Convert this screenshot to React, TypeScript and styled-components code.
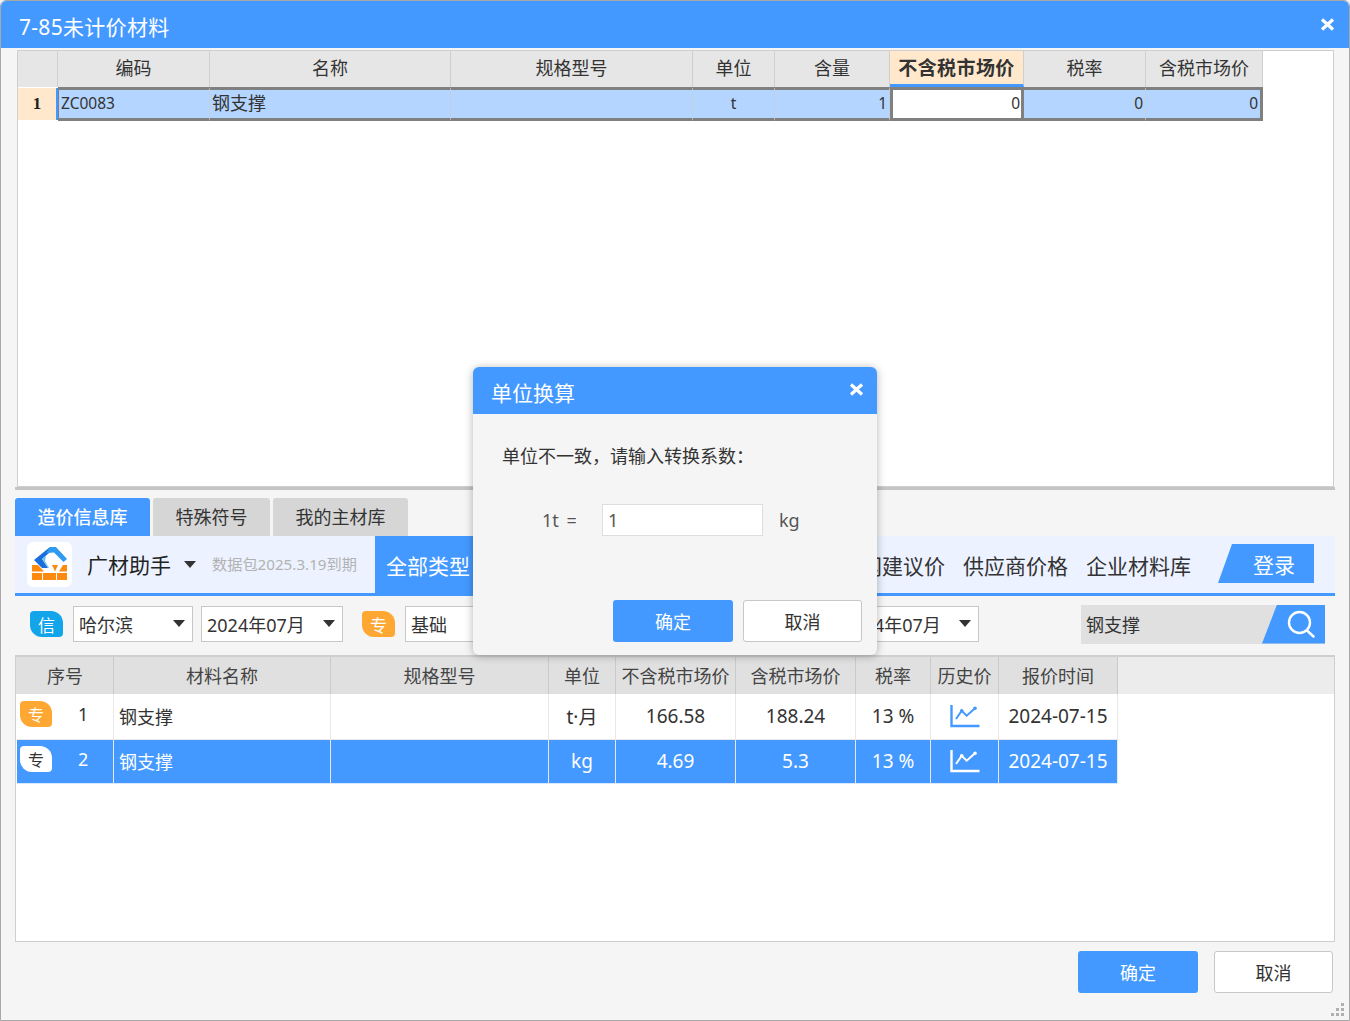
import React from 'react';
import styled, { createGlobalStyle } from 'styled-components';

const BLUE = '#4399ff';
const FONT = '"Noto Sans", "Noto Sans CJK SC", sans-serif';

const GlobalStyle = createGlobalStyle`
  html, body {
    margin: 0;
    padding: 0;
    background: #f5f5f5;
  }
  * {
    box-sizing: border-box;
  }
  body {
    font-family: ${FONT};
    color: #333;
  }
`;

const Page = styled.div`
  position: relative;
  width: 1350px;
  height: 1021px;
  overflow: hidden;
  background: #f5f5f5;
  border: 1px solid #a8a8a8;
  border-radius: 6px 6px 0 0;
  display: flex;
  flex-direction: column;
`;

const TitleBar = styled.div`
  flex: none;
  height: 47px;
  background: ${BLUE};
  color: #fff;
  font-size: 21px;
  display: flex;
  align-items: center;
  justify-content: space-between;
  padding: 0 14px 0 18px;
  border-radius: 5px 5px 0 0;
`;

const TitleText = styled.span`
  padding-top: 2px;
  letter-spacing: 0.3px;
`;

const CloseBtn = styled.svg`
  display: block;
`;

const TopPanel = styled.div`
  flex: none;
  height: 437px;
  margin: 2px 15px 0 16px;
  background: #fff;
  border: 1px solid #cfcfcf;
`;

const topCols = '40px 152px 241px 242px 82px 115px 134px 122px 117px';

const TopHead = styled.div`
  display: grid;
  grid-template-columns: ${topCols};
  height: 36px;
  width: 1245px;
`;

const TopHeadCell = styled.div<{ $active?: boolean }>`
  display: flex;
  align-items: center;
  justify-content: center;
  font-size: ${p => (p.$active ? '19px' : '18px')};
  letter-spacing: ${p => (p.$active ? '0.4px' : '0')};
  color: #333;
  font-weight: ${p => (p.$active ? 700 : 400)};
  background: ${p => (p.$active ? '#ffe8cc' : '#e6e6e6')};
  border-right: 1px solid #cfcfcf;
  border-bottom: ${p => (p.$active ? `3px solid ${BLUE}` : 'none')};
  padding-bottom: ${p => (p.$active ? '1px' : '4px')};
  white-space: nowrap;
`;

const TopRow = styled.div`
  display: grid;
  grid-template-columns: ${topCols};
  grid-template-rows: 34px;
  height: 34px;
  width: 1245px;
  line-height: 20px;
`;

const RowNum = styled.div`
  background: #ffe8cc;
  border-right: 2px solid ${BLUE};
  margin-top: 1px;
  margin-bottom: 1px;
  display: flex;
  align-items: center;
  justify-content: center;
  font-family: "Liberation Serif", serif;
  font-weight: 700;
  font-size: 17px;
  color: #222;
`;

const TopCell = styled.div<{ $align?: string; $num?: boolean; $first?: boolean; $last?: boolean }>`
  background: #b3d5ff;
  border-top: 3px solid #808080;
  border-bottom: 3px solid #808080;
  border-right: ${p => (p.$last ? '3px solid #808080' : '1px solid #c4cfdc')};
  border-left: ${p => (p.$first ? '1px solid #808080' : 'none')};
  display: flex;
  align-items: center;
  justify-content: ${p => p.$align || 'flex-start'};
  padding: 0 2px 3px;
  font-size: ${p => (p.$num ? '15.500px' : '18px')};
  color: #333;
  white-space: nowrap;
`;

const ActiveCell = styled.div`
  background: #fff;
  border: 3px solid #808080;
  display: flex;
  align-items: center;
  justify-content: flex-end;
  padding: 0 1px 3px;
  font-size: 15.500px;
  color: #333;
`;

const Splitter = styled.div`
  flex: none;
  height: 3px;
  margin: 0 14px;
  background: #c4c4c4;
`;

const Tabs = styled.div`
  flex: none;
  display: flex;
  gap: 3px;
  height: 38px;
  margin: 8px 0 0 14px;
`;

const Tab = styled.div<{ $active?: boolean; $w: number }>`
  width: ${p => p.$w}px;
  background: ${p => (p.$active ? BLUE : '#d6d6d6')};
  color: ${p => (p.$active ? '#fff' : '#333')};
  font-size: 18px;
  font-weight: ${p => (p.$active ? 500 : 400)};
  border-radius: 3px 3px 0 0;
  display: flex;
  align-items: center;
  justify-content: center;
  padding-bottom: 2px;
`;

const Toolbar = styled.div`
  flex: none;
  height: 60px;
  margin: 0 14px;
  background: #ecf2ff;
  border-bottom: 3px solid ${BLUE};
  display: flex;
  align-items: stretch;
  padding-left: 12px;
`;

const LogoBox = styled.div`
  flex: none;
  width: 45px;
  height: 45px;
  margin-top: 6px;
  background: #fff;
  border-radius: 6px;
`;

const BrandName = styled.div`
  margin-left: 15px;
  font-size: 21px;
  color: #222;
  align-self: center;
  white-space: nowrap;
  padding-bottom: 2px;
`;

const Caret = styled.div<{ $size?: number }>`
  flex: none;
  width: 0;
  height: 0;
  border-left: ${p => p.$size ?? 6}px solid transparent;
  border-right: ${p => p.$size ?? 6}px solid transparent;
  border-top: ${p => (p.$size ?? 6) + 1}px solid #333;
`;

const BrandCaret = styled(Caret)`
  align-self: center;
  margin: 0 0 0 13px;
`;

const PackNote = styled.div`
  margin-left: 16px;
  width: 163px;
  font-size: 15.200px;
  color: #b2b2b2;
  align-self: center;
  white-space: nowrap;
  padding-bottom: 4px;
`;

const NavActive = styled.div`
  background: ${BLUE};
  color: #fff;
  font-size: 21px;
  display: flex;
  align-items: center;
  padding: 0 11px;
  white-space: nowrap;
`;

const NavItems = styled.div`
  flex: 1;
  display: flex;
  align-items: center;
  justify-content: flex-end;
  gap: 18px;
  font-size: 21px;
  color: #333;
  white-space: nowrap;
`;

const Login = styled.div`
  flex: none;
  width: 96px;
  height: 39px;
  margin: 8px 21px 0 27px;
  background: ${BLUE};
  color: #fff;
  font-size: 21px;
  clip-path: polygon(14px 0, 100% 0, 100% 100%, 0 100%);
  display: flex;
  align-items: center;
  justify-content: center;
  padding-left: 16px;
`;

const Filters = styled.div`
  flex: none;
  height: 59px;
  margin: 0 14px;
  display: flex;
  align-items: center;
  padding: 0 10px 3px 15px;
`;

const Badge = styled.div<{ $color: string; $text?: string; $ml?: number }>`
  flex: none;
  width: 33px;
  height: 26px;
  margin-left: ${p => p.$ml ?? 0}px;
  background: ${p => p.$color};
  color: ${p => p.$text || '#fff'};
  border-radius: 4px 12px 4px 12px;
  font-size: 17px;
  display: flex;
  align-items: center;
  justify-content: center;
`;

const Select = styled.div<{ $w: number; $ml: number }>`
  flex: none;
  width: ${p => p.$w}px;
  height: 36px;
  margin-left: ${p => p.$ml}px;
  background: #fff;
  border: 1px solid #c8c8c8;
  display: flex;
  align-items: center;
  justify-content: space-between;
  padding: 0 7px 1px 5px;
  font-size: 18px;
  color: #333;
  white-space: nowrap;
`;

const SearchBox = styled.div`
  flex: none;
  width: 244px;
  height: 39px;
  margin-left: 102px;
  background: #e0e0e0;
  display: flex;
  align-items: center;
  font-size: 18px;
  color: #333;
  padding-left: 5px;
  position: relative;
`;

const SearchBtn = styled.div`
  position: absolute;
  right: 0;
  top: 0;
  width: 63px;
  height: 39px;
  background: ${BLUE};
  clip-path: polygon(15px 0, 100% 0, 100% 100%, 0 100%);
  display: flex;
  align-items: center;
  justify-content: center;
  padding-left: 15px;
`;

const LowerPanel = styled.div`
  flex: none;
  height: 287px;
  margin: 0 14px;
  background: #fff;
  border: 1px solid #cfcfcf;
  border-top-width: 2px;
`;

const lowCols = '97px 217px 218px 67px 120px 120px 75px 68px 119px';

const LowHead = styled.div`
  display: grid;
  grid-template-columns: ${lowCols} 1fr;
  height: 37px;
  padding-left: 1px;
  background: #e0e0e0;
`;

const LowHeadCell = styled.div`
  display: flex;
  align-items: center;
  justify-content: center;
  font-size: 18px;
  color: #444;
  border-right: 1px solid #cacaca;
  padding-bottom: 2px;
  white-space: nowrap;
  &:last-child {
    background: #ececec;
    border-right: none;
  }
`;

const LowRow = styled.div<{ $selected?: boolean; $h: number }>`
  display: grid;
  grid-template-columns: ${lowCols};
  width: 1101px;
  height: ${p => p.$h}px;
  margin-left: 1px;
  background: ${p => (p.$selected ? BLUE : '#fff')};
  color: ${p => (p.$selected ? '#fff' : '#333')};
  border-bottom: 1px solid ${p => (p.$selected ? '#d8e8fb' : '#e8e8e8')};
`;

const LowCell = styled.div<{ $left?: boolean }>`
  display: flex;
  align-items: center;
  justify-content: ${p => (p.$left ? 'flex-start' : 'center')};
  padding-left: ${p => (p.$left ? '5px' : '0')};
  padding-bottom: 1px;
  font-size: ${p => (p.$left ? '18px' : '19px')};
  border-right: 1px solid #e8e8e8;
  white-space: nowrap;
`;

const SeqCell = styled(LowCell)`
  justify-content: flex-start;
  padding-left: 3px;
  gap: 26px;
  font-size: 18px;
`;

const SmallBadge = styled(Badge)`
  width: 32px;
  height: 26px;
  font-size: 16px;
  margin-bottom: 4px;
`;

const SeqNum = styled.span`
  margin-bottom: 4px;
`;

const Footer = styled.div`
  flex: none;
  display: flex;
  justify-content: flex-end;
  gap: 16px;
  margin-top: 9px;
  padding-right: 16px;
`;

const Button = styled.div<{ $primary?: boolean }>`
  width: ${p => (p.$primary ? 120 : 119)}px;
  height: 42px;
  border-radius: 3px;
  background: ${p => (p.$primary ? BLUE : '#fff')};
  color: ${p => (p.$primary ? '#fff' : '#333')};
  border: ${p => (p.$primary ? 'none' : '1px solid #c8c8c8')};
  font-size: 18px;
  display: flex;
  align-items: center;
  justify-content: center;
`;

const Grip = styled.svg`
  position: absolute;
  right: 4px;
  bottom: 4px;
`;

const Dialog = styled.div`
  position: absolute;
  left: 472px;
  top: 366px;
  width: 404px;
  height: 288px;
  background: #f5f5f5;
  border-radius: 6px;
  box-shadow: 0 1px 8px rgba(0, 0, 0, 0.3);
  overflow: hidden;
  display: flex;
  flex-direction: column;
`;

const DialogHead = styled.div`
  flex: none;
  height: 47px;
  background: ${BLUE};
  color: #fff;
  font-size: 21px;
  display: flex;
  align-items: center;
  justify-content: space-between;
  padding: 3px 13px 0 18px;
`;

const DialogClose = styled.div`
  margin-top: -6px;
`;

const DialogMsg = styled.div`
  margin: 29px 0 0 29px;
  font-size: 18px;
  line-height: 26px;
  color: #333;
`;

const ConvertRow = styled.div`
  display: flex;
  align-items: center;
  margin: 35px 0 0 69px;
  font-size: 18px;
  color: #555;
`;

const ConvertLabel = styled.span`
  width: 60px;
  word-spacing: 3px;
`;

const ConvertInput = styled.div`
  width: 161px;
  height: 32px;
  background: #fff;
  border: 1px solid #dedede;
  padding-left: 5px;
  display: flex;
  align-items: center;
  margin-right: 16px;
`;

const DialogButtons = styled.div`
  margin: 64px 0 0 140px;
  display: flex;
  gap: 10px;
`;

const Logo = () => (
  <svg width="45" height="45" viewBox="0 0 45 45">
    <path d="M7 18 L23 5 H29 L15 17 L21 26 H15 Z" fill="#1a6fdc" />
    <path d="M23 5 H29 L40 17 L36.500 20 L27 10.500 L19 11 Z" fill="#2f9bf0" />
    <path d="M15 17 L19 14 L18 19 L22 26 H21 Z" fill="#6cc0f7" />
    <g fill="#fb8a0e">
      <path d="M5 23 H11 L17 29.500 H5 Z" />
      <path d="M25 23 H31 L28 29.500 Z" />
      <path d="M32 29.500 L36 23 H40 V29.500 Z" />
      <rect x="5" y="31" width="10" height="7" />
      <rect x="16" y="31" width="13" height="7" />
      <rect x="30" y="31" width="10" height="7" />
    </g>
  </svg>
);

const ChartIcon = ({ color }: { color: string }) => (
  <svg width="30" height="24" viewBox="0 0 30 24" fill="none" stroke={color}>
    <path d="M1.500 1 V22 H29.500" strokeWidth="2.400" />
    <path d="M6 15 L11.700 6.700 L16.700 11.700 L25 4.300" strokeWidth="2" />
    <circle cx="11.700" cy="6.700" r="1.800" fill={color} strokeWidth="0" />
    <circle cx="25" cy="4.300" r="1.800" fill={color} strokeWidth="0" />
  </svg>
);

const CrossIcon = () => (
  <CloseBtn width="15" height="13" viewBox="0 0 15 13">
    <path d="M2 1.500 L13 11.500 M13 1.500 L2 11.500" stroke="#fff" strokeWidth="3.200" />
  </CloseBtn>
);

const SearchIcon = () => (
  <svg width="30" height="28" viewBox="0 0 30 28" fill="none" stroke="#fff" strokeWidth="2.400">
    <circle cx="13.500" cy="12.500" r="10.500" />
    <path d="M21 20.500 L27.500 26.500" strokeLinecap="round" />
  </svg>
);

const topHeaders = ['', '编码', '名称', '规格型号', '单位', '含量', '不含税市场价', '税率', '含税市场价'];
const lowHeaders = ['序号', '材料名称', '规格型号', '单位', '不含税市场价', '含税市场价', '税率', '历史价', '报价时间', ''];

const rows = [
  { no: 1, name: '钢支撑', unit: 't·月', price: '166.58', taxed: '188.24', rate: '13 %', date: '2024-07-15' },
  { no: 2, name: '钢支撑', unit: 'kg', price: '4.69', taxed: '5.3', rate: '13 %', date: '2024-07-15' },
];

export default function App() {
  return (
    <Page>
      <GlobalStyle />
      <TitleBar>
        <TitleText>7-85未计价材料</TitleText>
        <CrossIcon />
      </TitleBar>

      <TopPanel>
        <TopHead>
          {topHeaders.map((h, i) => (
            <TopHeadCell key={i} $active={i === 6}>{h}</TopHeadCell>
          ))}
        </TopHead>
        <TopRow>
          <RowNum>1</RowNum>
          <TopCell $num $first>ZC0083</TopCell>
          <TopCell>钢支撑</TopCell>
          <TopCell />
          <TopCell $num $align="center">t</TopCell>
          <TopCell $num $align="flex-end">1</TopCell>
          <ActiveCell>0</ActiveCell>
          <TopCell $num $align="flex-end">0</TopCell>
          <TopCell $num $align="flex-end" $last>0</TopCell>
        </TopRow>
      </TopPanel>

      <Splitter />

      <Tabs>
        <Tab $active $w={135}>造价信息库</Tab>
        <Tab $w={117}>特殊符号</Tab>
        <Tab $w={135}>我的主材库</Tab>
      </Tabs>

      <Toolbar>
        <LogoBox><Logo /></LogoBox>
        <BrandName>广材助手</BrandName>
        <BrandCaret />
        <PackNote>数据包2025.3.19到期</PackNote>
        <NavActive>全部类型</NavActive>
        <NavItems>
          <span>广材网建议价</span>
          <span>供应商价格</span>
          <span>企业材料库</span>
        </NavItems>
        <Login>登录</Login>
      </Toolbar>

      <Filters>
        <Badge $color="#12a5ea">信</Badge>
        <Select $w={120} $ml={10}>哈尔滨<Caret /></Select>
        <Select $w={142} $ml={8}>2024年07月<Caret /></Select>
        <Badge $color="#ffa733" $ml={19}>专</Badge>
        <Select $w={120} $ml={10}>基础<Caret /></Select>
        <Select $w={142} $ml={312}>2024年07月<Caret /></Select>
        <SearchBox>
          钢支撑
          <SearchBtn><SearchIcon /></SearchBtn>
        </SearchBox>
      </Filters>

      <LowerPanel>
        <LowHead>
          {lowHeaders.map((h, i) => (
            <LowHeadCell key={i}>{h}</LowHeadCell>
          ))}
        </LowHead>
        {rows.map((r, i) => (
          <LowRow key={r.no} $selected={i === 1} $h={i === 1 ? 44 : 46}>
            <SeqCell>
              {i === 1
                ? <SmallBadge $color="#fff" $text="#333">专</SmallBadge>
                : <SmallBadge $color="#ffa733">专</SmallBadge>}
              <SeqNum>{r.no}</SeqNum>
            </SeqCell>
            <LowCell $left>{r.name}</LowCell>
            <LowCell />
            <LowCell>{r.unit}</LowCell>
            <LowCell>{r.price}</LowCell>
            <LowCell>{r.taxed}</LowCell>
            <LowCell>{r.rate}</LowCell>
            <LowCell><ChartIcon color={i === 1 ? '#fff' : BLUE} /></LowCell>
            <LowCell>{r.date}</LowCell>
          </LowRow>
        ))}
      </LowerPanel>

      <Footer>
        <Button $primary>确定</Button>
        <Button>取消</Button>
      </Footer>

      <Grip width="14" height="14" viewBox="0 0 14 14" fill="#b0b0b0">
        <rect x="10" y="1" width="3" height="3" />
        <rect x="5" y="6" width="3" height="3" />
        <rect x="10" y="6" width="3" height="3" />
        <rect x="0" y="11" width="3" height="3" />
        <rect x="5" y="11" width="3" height="3" />
        <rect x="10" y="11" width="3" height="3" />
      </Grip>

      <Dialog>
        <DialogHead>
          <span>单位换算</span>
          <DialogClose><CrossIcon /></DialogClose>
        </DialogHead>
        <DialogMsg>单位不一致，请输入转换系数：</DialogMsg>
        <ConvertRow>
          <ConvertLabel>1t =</ConvertLabel>
          <ConvertInput>1</ConvertInput>
          <span>kg</span>
        </ConvertRow>
        <DialogButtons>
          <Button $primary>确定</Button>
          <Button>取消</Button>
        </DialogButtons>
      </Dialog>
    </Page>
  );
}
